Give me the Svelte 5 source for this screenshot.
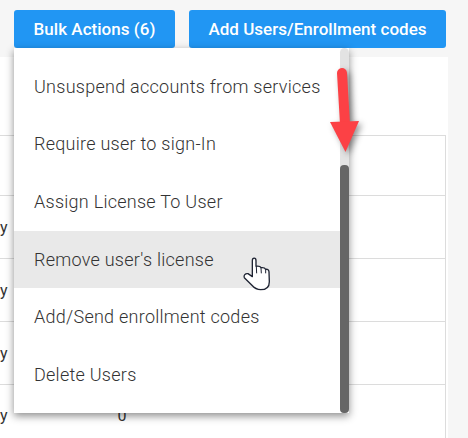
<script>
  let menuItems = [
    "Unsuspend accounts from services",
    "Require user to sign-In",
    "Assign License To User",
    "Remove user's license",
    "Add/Send enrollment codes",
    "Delete Users"
  ];
  let hovered = 3;
</script>

<div class="page">
  <div class="toolbar">
    <button class="btn btn--bulk">Bulk Actions (6)</button>
    <button class="btn btn--add">Add Users/Enrollment codes</button>
  </div>

  <div class="panel">
    <div class="table">
      <div class="row row--first"></div>
      <div class="row row--a"><span>y</span></div>
      <div class="row row--b"><span>y</span></div>
      <div class="row row--b"><span>y</span></div>
      <div class="row row--last"><span>y</span><span class="count">0</span></div>
    </div>
  </div>

  <div class="menu">
    {#each menuItems as item, i}
      <div class="menu__item" class:menu__item--hover={i === hovered}>{item}</div>
    {/each}
    <div class="scroll"><div class="scroll__thumb"></div></div>
  </div>

  <svg class="arrow" width="40" height="90" viewBox="0 0 40 90">
    <path d="M12 7 L15 58" stroke="#fc4145" stroke-width="10" stroke-linecap="round" fill="none" />
    <polygon points="0,56 29,55 15.5,86" fill="#fc4145" />
  </svg>

  <svg class="hand" width="80" height="60" viewBox="0 0 240 180">
    <path
      d="M97 62 C97 52 108 52 108 62 L108 79 C115 78 121 79 123 83 C130 82 135 84 137 88 C143 87 147 90 147 96 L148 125 C148 140 138 149 122 149 C110 149 102 143 95 135 L73 113 C70 107 76 99 84 101 L97 110 Z"
      fill="#fff"
      stroke="#1f2433"
      stroke-width="4"
      stroke-linejoin="round"
    />
    <path d="M109 80 L110 100 M123 84 L124 100 M137 89 L137 100" stroke="#1f2433" stroke-width="3" fill="none" />
  </svg>
</div>

<style>
  :global(body) {
    margin: 0;
    background: #f6f6f6;
  }

  .page {
    position: relative;
    width: 468px;
    height: 438px;
    overflow: hidden;
    font-family: Roboto, sans-serif;
  }

  .toolbar {
    display: flex;
    gap: 14px;
    height: 57px;
    padding: 10px 0 0 14px;
    box-sizing: border-box;
  }

  .btn {
    height: 38px;
    padding: 0;
    color: #fff;
    font-family: Roboto, sans-serif;
    font-size: 17px;
    font-weight: 500;
    letter-spacing: 0.03px;
    border: none;
    border-radius: 3px;
    background: #2196f3;
  }

  .btn--bulk {
    width: 161px;
  }

  .btn--add {
    width: 257px;
  }

  .panel {
    width: 448px;
    height: 381px;
    padding-top: 78px;
    box-sizing: border-box;
    background: #fff;
  }

  .table {
    width: 446px;
    height: 303px;
    box-sizing: border-box;
    border-top: 1px solid #dcdcdc;
    border-right: 1px solid #dcdcdc;
    background: #fff;
  }

  .row {
    display: flex;
    align-items: center;
    box-sizing: border-box;
    border-bottom: 1px solid #dcdcdc;
    color: #333;
    font-size: 16px;
  }

  .row--first {
    height: 60px;
  }

  .row--a {
    height: 63px;
  }

  .row--b {
    height: 63px;
  }

  .row--last {
    height: 60px;
    border-bottom: none;
  }

  .count {
    margin-left: 110px;
  }

  .menu {
    position: absolute;
    top: 48px;
    left: 14px;
    width: 335px;
    height: 365px;
    padding-top: 10px;
    box-sizing: border-box;
    background: #fff;
    box-shadow: 0 3px 8px rgba(0, 0, 0, 0.45);
  }

  .menu__item {
    display: flex;
    align-items: center;
    height: 57.6px;
    padding-left: 20px;
    padding-bottom: 1px;
    box-sizing: border-box;
    color: #333;
    font-size: 18px;
    font-weight: 300;
    letter-spacing: 0.26px;
  }

  .menu__item--hover {
    background: #e9e9e9;
  }

  .scroll {
    position: absolute;
    top: 0;
    right: 0;
    width: 9px;
    height: 365px;
    border-radius: 5px;
    background: #e3e3e3;
  }

  .scroll__thumb {
    margin-top: 117px;
    height: 248px;
    border-radius: 4px;
    background: #666;
  }

  .arrow {
    position: absolute;
    top: 66px;
    left: 330px;
    overflow: visible;
    filter: drop-shadow(3px 3px 3px rgba(0, 0, 0, 0.4));
  }

  .hand {
    position: absolute;
    top: 240px;
    left: 220px;
  }
</style>
